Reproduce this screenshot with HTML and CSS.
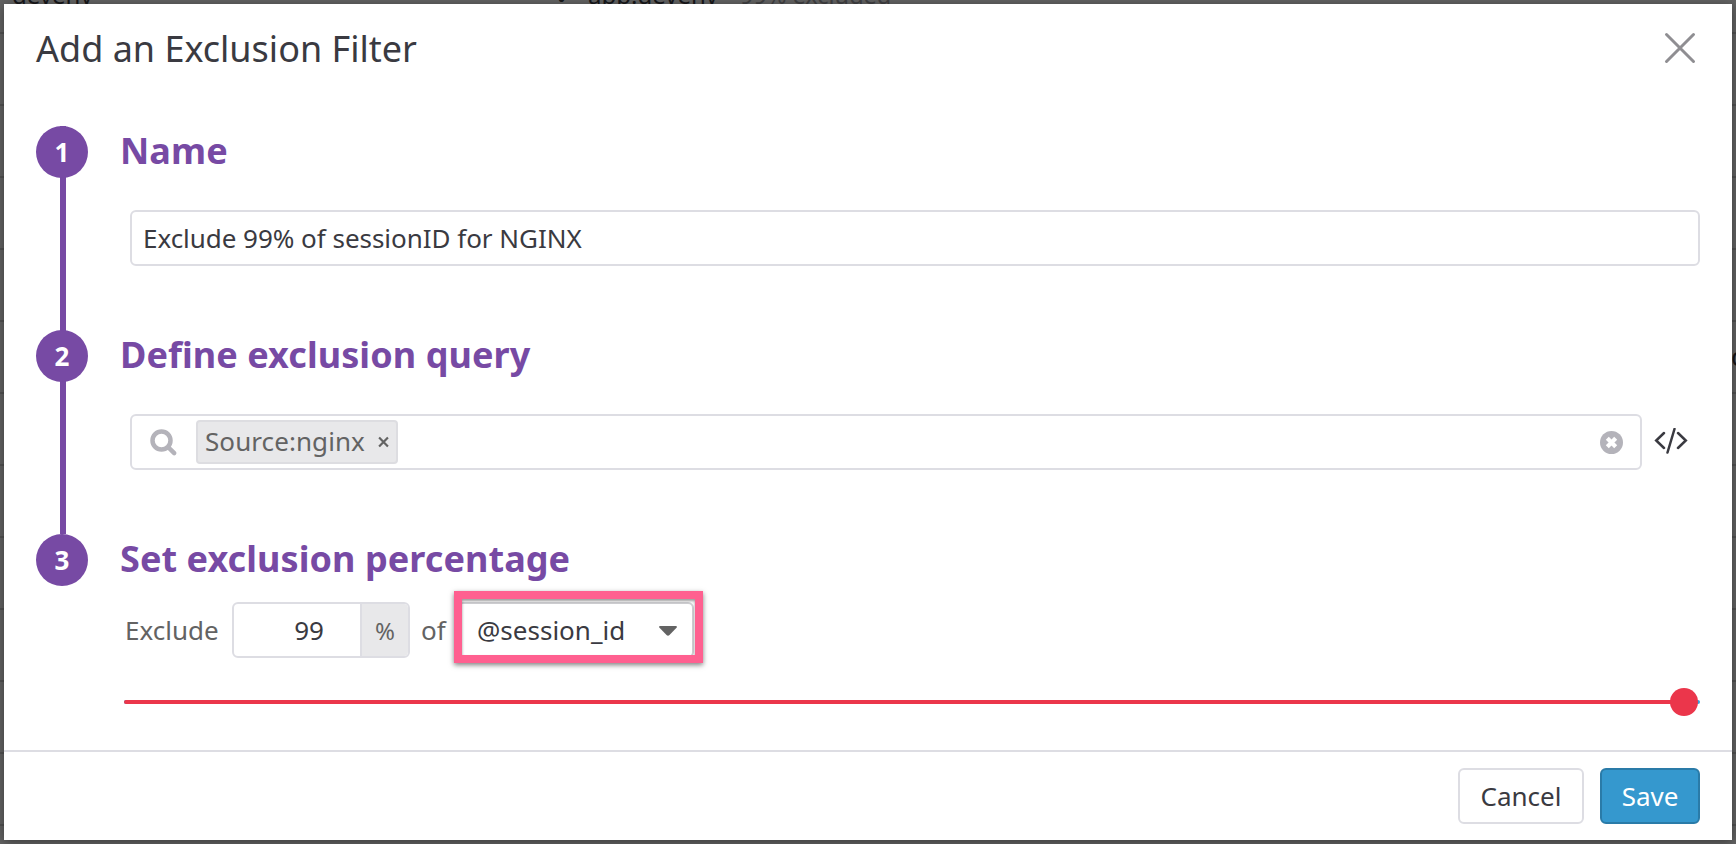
FILE: index.html
```
<!DOCTYPE html>
<html lang="en">
<head>
<meta charset="utf-8">
<title>Add an Exclusion Filter</title>
<link rel="stylesheet" href="styles.css">
</head>
<body>
<div class="backdrop">
  <span class="behind behind-host">devenv</span>
  <span class="behind behind-dot">•</span>
  <span class="behind behind-app">app.devenv</span>
  <span class="behind behind-rate">99% excluded</span>
  <span class="behind behind-edge">d</span>
</div>
<main class="modal">
  <header class="modal-header">
    <h1 class="title">Add an Exclusion Filter</h1>
    <svg class="close" width="32" height="32" viewBox="0 0 32 32"><path d="M2.500 2.500 29.500 29.500M29.500 2.500 2.500 29.500"/></svg>
  </header>
  <div class="steps">
    <section class="step">
      <div class="rail"><span class="number">1</span></div>
      <div class="step-body">
        <h2 class="heading">Name</h2>
        <div class="field name-field">Exclude 99% of sessionID for NGINX</div>
      </div>
    </section>
    <section class="step">
      <div class="rail"><span class="number">2</span></div>
      <div class="step-body">
        <h2 class="heading">Define exclusion query</h2>
        <div class="query-row">
          <div class="field query-field">
            <svg class="search" width="28" height="28" viewBox="0 0 28 28"><circle cx="11.500" cy="11.500" r="9"/><path d="M18.500 18.500 24.200 24.200"/></svg>
            <span class="tag">Source:nginx<svg class="tag-x" width="12" height="12" viewBox="0 0 12 12"><path d="M1.200 1.200 10.800 10.800M10.800 1.200 1.200 10.800"/></svg></span>
            <svg class="clear" width="23" height="23" viewBox="0 0 23 23"><circle cx="11.500" cy="11.500" r="11.500"/><path d="M7.300 7.300 15.700 15.700M15.700 7.300 7.300 15.700"/></svg>
          </div>
          <svg class="code" width="34" height="26" viewBox="0 0 34 26"><path d="M10 5 2.200 12.500 10 20M24 5 31.800 12.500 24 20M20.500 1 13.500 24.500"/></svg>
        </div>
      </div>
    </section>
    <section class="step last">
      <div class="rail"><span class="number">3</span></div>
      <div class="step-body">
        <h2 class="heading">Set exclusion percentage</h2>
        <div class="percent-row">
          <span class="label">Exclude</span>
          <div class="amount"><span class="amount-value">99</span><span class="amount-unit">%</span></div>
          <span class="label of">of</span>
          <div class="select">@session_id<svg class="caret" width="18" height="10" viewBox="0 0 18 10"><path d="M1 0H17Q18.500.500 17.500 1.800L10.500 9Q9 10.500 7.500 9L.5 1.800Q-.5.500 1 0Z"/></svg><div class="highlight"></div></div>
        </div>
        <div class="slider"><div class="slider-fill"></div><div class="thumb"></div></div>
      </div>
    </section>
  </div>
  <footer class="modal-footer">
    <button class="button">Cancel</button>
    <button class="button primary">Save</button>
  </footer>
</main>
</body>
</html>
```
FILE: styles.css
```
* { box-sizing: border-box; }
body {
  margin: 0;
  width: 1736px;
  height: 844px;
  padding: 4px;
  overflow: hidden;
  position: relative;
  font-family: "Noto Sans", sans-serif;
  font-size: 26px;
  color: #3a3a41;
}
.backdrop {
  position: absolute;
  inset: 0;
  overflow: hidden;
  background: repeating-linear-gradient(to bottom, #636363 0 32px, #525252 32px 34px, #636363 34px 72px);
}
.behind {
  position: absolute;
  line-height: 36px;
  top: -23px;
  color: #17171a;
  font-size: 24px;
  white-space: nowrap;
}
.behind-host { left: 12px; }
.behind-dot { left: 557px; top: -19px; }
.behind-app { left: 588px; }
.behind-rate { left: 740px; color: #404042; font-size: 23.500px; }
.behind-edge { left: 1731px; top: 338px; font-size: 26px; }
.modal {
  position: relative;
  width: 1728px;
  height: 836px;
  background: #fff;
  box-shadow: 0 2px 10px rgba(0, 0, 0, .4);
  display: flex;
  flex-direction: column;
}
.modal-header {
  height: 88px;
  padding: 0 36px 0 32px;
  display: flex;
  align-items: center;
  justify-content: space-between;
}
.title { margin: 0; padding-top: 2px; font-size: 36px; line-height: 48px; font-weight: 400; }
.close { fill: none; stroke: #8f8e92; stroke-width: 3; stroke-linecap: round; }
.steps { flex: 1; padding: 34px 32px 0; }
.step { display: flex; height: 204px; }
.rail {
  width: 84px;
  flex: none;
  background: linear-gradient(#774aa4, #774aa4) 24px 0 / 6px 100% no-repeat;
}
.last { height: auto; }
.last .rail { background: none; }
.number {
  display: block;
  width: 52px;
  height: 52px;
  border-radius: 50%;
  background: #774aa4;
  color: #fff;
  font-size: 26px;
  line-height: 52px;
  font-weight: 700;
  text-align: center;
}
.step-body { flex: 1; min-width: 0; }
.heading {
  margin: 0 0 35px;
  padding-top: 1px;
  font-size: 36px;
  line-height: 48px;
  font-weight: 700;
  letter-spacing: .07px;
  color: #774aa4;
}
.last .heading { margin-bottom: 19px; }
.field {
  height: 56px;
  border: 2px solid #dddde3;
  border-radius: 6px;
  margin-left: 10px;
  display: flex;
  align-items: center;
}
.name-field { padding-left: 11px; letter-spacing: -.03px; }
.query-row { display: flex; align-items: center; }
.query-field { width: 1512px; padding: 0 17px; }
.search { fill: none; stroke: #b4b3ba; stroke-width: 4.500; stroke-linecap: round; margin: 2px 0 0 1px; }
.tag {
  width: 202px;
  height: 44px;
  margin-left: 18px;
  padding: 0 7px 3px;
  border: 2px solid #dddde1;
  border-radius: 4px;
  background: #e8e8ea;
  color: #636363;
  line-height: 36px;
  letter-spacing: .08px;
  display: flex;
  align-items: center;
}
.tag-x { margin: 2px 0 0 13px; fill: none; stroke: #636363; stroke-width: 2.400; }
.clear { margin-left: auto; fill: #b4b3ba; }
.clear path { stroke: #fff; stroke-width: 4.200; }
.code { margin-left: 12px; margin-bottom: 2px; fill: none; stroke: #3a3a41; stroke-width: 2.500; stroke-linecap: round; }
.percent-row { display: flex; align-items: center; height: 56px; padding-left: 2px; }
.label { color: #636363; width: 110px; padding-left: 3px; }
.of { width: 47px; padding-left: 11px; }
.amount {
  width: 178px;
  height: 56px;
  flex: none;
  border: 2px solid #dddde3;
  border-radius: 6px;
  display: flex;
  line-height: 52px;
  overflow: hidden;
}
.amount-value { flex: 1; padding-right: 36px; text-align: right; }
.amount-unit {
  width: 48px;
  border-left: 2px solid #dddde3;
  background: #e8e8ea;
  color: #636363;
  font-size: 24px;
  line-height: 54px;
  text-align: center;
}
.select {
  position: relative;
  width: 237px;
  height: 56px;
  border: 2px solid #cfcfd2;
  border-radius: 6px;
  padding: 0 15px 0 18px;
  display: flex;
  align-items: center;
  justify-content: space-between;
}
.caret { fill: #636363; margin-top: 2px; }
.highlight {
  position: absolute;
  left: -5px;
  top: -13px;
  width: 249px;
  height: 72px;
  border: 8px solid #ff6090;
  box-shadow: 0 2px 5px rgba(0, 0, 0, .5), inset 0 2px 3px rgba(0, 0, 0, .4);
}
.slider {
  position: relative;
  margin: 42px 0 0 4px;
  height: 4px;
  border-radius: 2px;
  background: #38a0d8;
}
.slider-fill { width: 1560px; height: 4px; border-radius: 2px; background: #eb364b; }
.thumb {
  position: absolute;
  right: 2px;
  top: -12px;
  width: 28px;
  height: 28px;
  border-radius: 50%;
  background: #eb364b;
}
.modal-footer {
  height: 90px;
  border-top: 2px solid #dddde3;
  padding: 16px 32px;
  display: flex;
  justify-content: flex-end;
  gap: 16px;
}
.button {
  width: 126px;
  height: 56px;
  padding: 0;
  border: 2px solid #dddde3;
  border-radius: 6px;
  background: #fff;
  color: #3a3a41;
  font: 26px/52px "Noto Sans", sans-serif;
}
.primary { width: 100px; background: #3598ce; border-color: #2a7ba8; color: #fff; }
```
